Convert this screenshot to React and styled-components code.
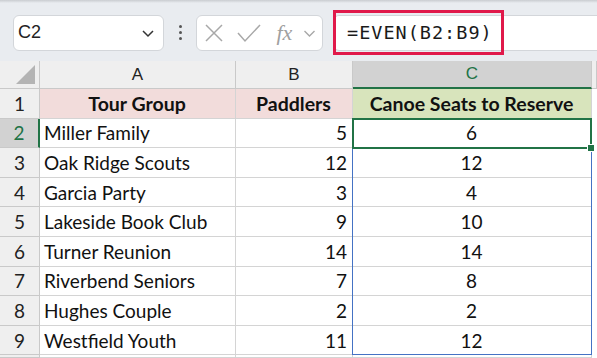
import styled, { createGlobalStyle } from "styled-components";

const Global = createGlobalStyle`
  body { margin: 0; background: #fff; }
`;

const rows = [
  ["Miller Family", 5, 6],
  ["Oak Ridge Scouts", 12, 12],
  ["Garcia Party", 3, 4],
  ["Lakeside Book Club", 9, 10],
  ["Turner Reunion", 14, 14],
  ["Riverbend Seniors", 7, 8],
  ["Hughes Couple", 2, 2],
  ["Westfield Youth", 11, 12],
];

const Page = styled.div`
  width: 597px;
  height: 358px;
  overflow: hidden;
  background: #e9ecf0;
  font-family: Lato, "Liberation Sans", sans-serif;
`;

const TopStrip = styled.div`
  height: 3px;
  background: linear-gradient(#c9ccd0, #e9ecf0);
`;

const Bar = styled.div`
  height: 58px;
  display: flex;
  align-items: center;
  padding-left: 13px;
  padding-top: 1px;
  box-sizing: border-box;
`;

const Box = styled.div`
  height: 36px;
  box-sizing: border-box;
  background: #fff;
  border: 1px solid #d3d6da;
  border-radius: 6px;
  display: flex;
  align-items: center;
`;

const NameBox = styled(Box)`
  width: 151px;
  padding: 0 8px 0 4px;
  justify-content: space-between;
  font-family: "Liberation Sans", sans-serif;
  font-size: 18px;
  color: #222;
`;

const Dots = styled.div`
  width: 32px;
  display: flex;
  flex-direction: column;
  align-items: center;
  gap: 3px;
  & > span {
    width: 3px;
    height: 3px;
    border-radius: 50%;
    background: #555;
  }
`;

const FxBox = styled(Box)`
  width: 127px;
  padding: 0 6px;
  justify-content: space-between;
`;

const FxText = styled.span`
  font-family: "Liberation Serif", serif;
  font-style: italic;
  font-size: 22px;
  color: #a0a0a0;
  margin-left: 4px;
`;

const FormulaField = styled.div`
  flex: 1;
  margin-left: 10px;
  height: 36px;
  box-sizing: border-box;
  background: #fff;
  border: 1px solid #d3d6da;
  border-right: none;
  border-radius: 6px 0 0 6px;
  display: flex;
  align-items: center;
`;

const Highlight = styled.div`
  width: 171px;
  height: 45px;
  flex: none;
  margin-left: -1px;
  box-sizing: border-box;
  border: 3px solid #e0194a;
  display: flex;
  align-items: center;
  padding-left: 11px;
  font-family: "DejaVu Sans Mono", monospace;
  font-size: 18.5px;
  letter-spacing: 1px;
  color: #1a1a1a;
`;

const Sheet = styled.div`
  display: grid;
  grid-template-columns: 40px 196px 117px 239px 1fr;
  grid-template-rows: 28px repeat(9, 29.6px) 1fr;
  height: 297px;
  background: #fff;
  position: relative;
`;

const Head = styled.div`
  background: ${(p) => (p.$active ? "#d2d2d2" : "#efefef")};
  color: ${(p) => (p.$active ? "#217346" : "#222")};
  border-right: 1px solid #c9c9c9;
  border-bottom: ${(p) => (p.$active ? "2px solid #217346" : "1px solid #c9c9c9")};
  display: flex;
  align-items: center;
  justify-content: center;
  font-family: "Liberation Sans", sans-serif;
  font-size: 17px;
  box-sizing: border-box;
  position: relative;
`;

const RowHead = styled(Head)`
  border-bottom: 1px solid #c9c9c9;
  border-right: ${(p) => (p.$active ? "2px solid #217346" : "1px solid #c9c9c9")};
  font-family: Lato, "Liberation Sans", sans-serif;
  font-size: 19px;
`;

const Corner = styled(Head)`
  &::after {
    content: "";
    position: absolute;
    right: 4px;
    bottom: 4px;
    border-style: solid;
    border-width: 0 0 19px 19px;
    border-color: transparent transparent #b4b4b4 transparent;
  }
`;

const Cell = styled.div`
  border-right: 1px solid #d4d4d4;
  border-bottom: 1px solid #d4d4d4;
  box-sizing: border-box;
  display: flex;
  align-items: center;
  justify-content: ${(p) => p.$align || "flex-start"};
  padding: 0 5px 0 4px;
  font-size: ${(p) => (p.$bold ? "19.5px" : "19px")};
  color: #111;
  background: ${(p) => p.$bg || "#fff"};
  font-weight: ${(p) => (p.$bold ? 700 : 400)};
  white-space: nowrap;
`;

/* overlays: absolutely positioned grid items take their grid area as the box
   and stay out of auto-placement */
const RangeBox = styled.div`
  position: absolute;
  grid-column: 4 / 5;
  grid-row: 3 / 11;
  inset: -1px 0 0 -1px;
  border: 1px solid #4472c4;
  pointer-events: none;
`;

const Selected = styled.div`
  position: absolute;
  grid-column: 4 / 5;
  grid-row: 3 / 4;
  inset: -1px 0 -1px -1px;
  border: 2px solid #217346;
  &::after {
    content: "";
    position: absolute;
    right: -5px;
    bottom: -5px;
    width: 6px;
    height: 6px;
    background: #217346;
    border: 1px solid #fff;
  }
`;

const Filler = styled.div`
  background: #fff;
`;

export default function App() {
  return (
    <Page>
      <Global />
      <TopStrip />
      <Bar>
        <NameBox>
          <span>C2</span>
          <svg width="14" height="10" viewBox="0 0 14 10">
            <path d="M2 3l5 5 5-5" fill="none" stroke="#333" strokeWidth="1.5" />
          </svg>
        </NameBox>
        <Dots>
          <span />
          <span />
          <span />
        </Dots>
        <FxBox>
          <svg width="22" height="22" viewBox="0 0 22 22">
            <path d="M3 3l16 16M19 3L3 19" stroke="#a8a8a8" strokeWidth="1.5" />
          </svg>
          <svg width="26" height="22" viewBox="0 0 26 22">
            <path d="M2 11l7 8L24 3" fill="none" stroke="#a8a8a8" strokeWidth="1.5" />
          </svg>
          <FxText>fx</FxText>
          <svg width="13" height="10" viewBox="0 0 13 10">
            <path d="M1.5 3l5 5 5-5" fill="none" stroke="#a8a8a8" strokeWidth="1.4" />
          </svg>
        </FxBox>
        <FormulaField>
          <Highlight>=EVEN(B2:B9)</Highlight>
        </FormulaField>
      </Bar>
      <Sheet>
        <Corner />
        <Head>A</Head>
        <Head>B</Head>
        <Head $active>C</Head>
        <Head />
        <RowHead>1</RowHead>
        <Cell $bg="#f2dcdb" $bold $align="center">Tour Group</Cell>
        <Cell $bg="#f2dcdb" $bold $align="center">Paddlers</Cell>
        <Cell $bg="#d8e4bc" $bold $align="center">Canoe Seats to Reserve</Cell>
        <Filler />
        {rows.map((r, i) => [
          <RowHead key={"h" + i} $active={i === 0}>{i + 2}</RowHead>,
          <Cell key={"a" + i}>{r[0]}</Cell>,
          <Cell key={"b" + i} $align="flex-end">{r[1]}</Cell>,
          <Cell key={"c" + i} $align="center">{r[2]}</Cell>,
          <Filler key={"f" + i} />,
        ])}
        <RowHead />
        <Cell />
        <Cell />
        <Cell />
        <Filler />
        <RangeBox />
        <Selected />
      </Sheet>
    </Page>
  );
}
